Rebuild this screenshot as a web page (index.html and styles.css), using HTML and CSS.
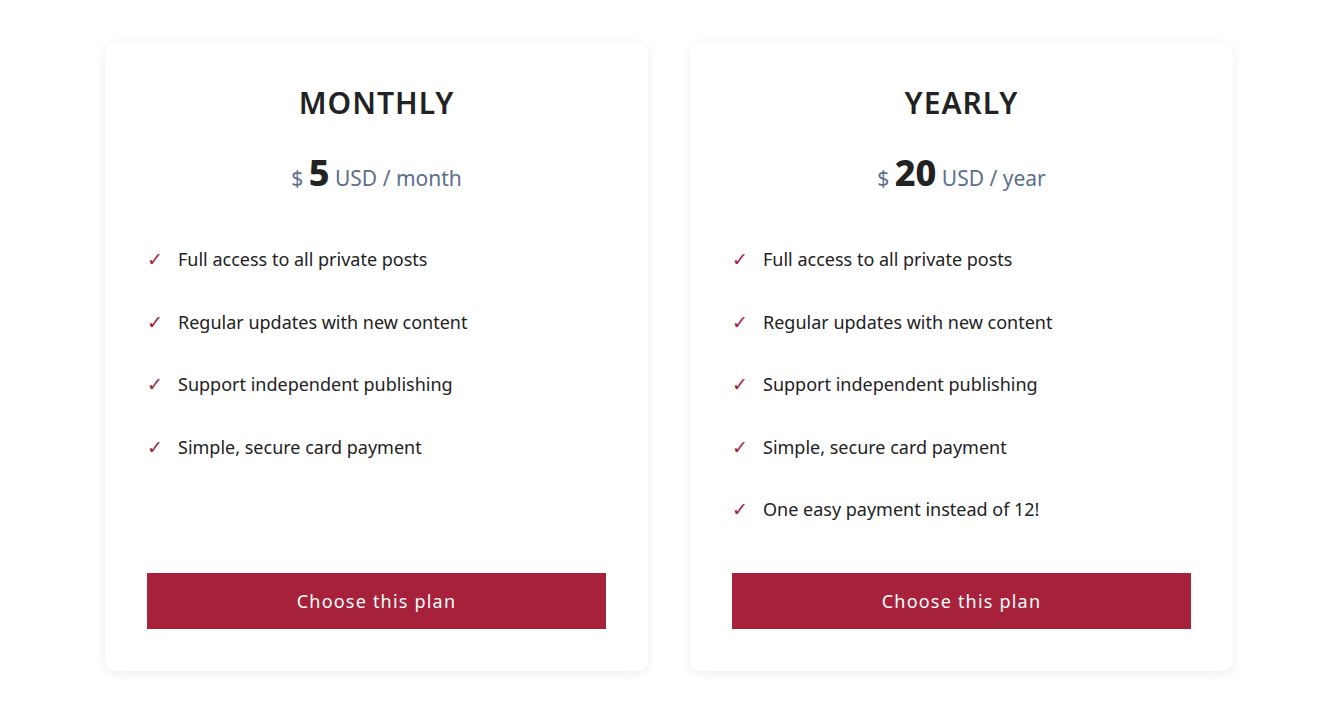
FILE: index.html
```html
<!DOCTYPE html>
<html lang="en">
<head>
    <meta charset="UTF-8">
    <meta name="viewport" content="width=device-width, initial-scale=1.0">
    <title>Plans</title>
    <link rel="stylesheet" href="styles.css">
</head>
<body>
    <div class="plans">
        <div class="plan">
            <h2 class="plan-name">MONTHLY</h2>
            <p class="plan-price">$ <strong>5</strong> USD / month</p>
            <ul class="plan-features">
                <li><span class="check">✓</span>Full access to all private posts</li>
                <li><span class="check">✓</span>Regular updates with new content</li>
                <li><span class="check">✓</span>Support independent publishing</li>
                <li><span class="check">✓</span>Simple, secure card payment</li>
            </ul>
            <button type="button" class="plan-button">Choose this plan</button>
        </div>

        <div class="plan">
            <h2 class="plan-name">YEARLY</h2>
            <p class="plan-price">$ <strong>20</strong> USD / year</p>
            <ul class="plan-features">
                <li><span class="check">✓</span>Full access to all private posts</li>
                <li><span class="check">✓</span>Regular updates with new content</li>
                <li><span class="check">✓</span>Support independent publishing</li>
                <li><span class="check">✓</span>Simple, secure card payment</li>
                <li><span class="check">✓</span>One easy payment instead of 12!</li>
            </ul>
            <button type="button" class="plan-button">Choose this plan</button>
        </div>
    </div>
</body>
</html>
```

FILE: styles.css
```css
body {
    font-family: "Noto Sans", "Open Sans", sans-serif;
    margin: 0;
    padding: 43px 0 36px 2px;
    background: #fff;
    color: #222;
}

.plans {
    max-width: 1128px;
    margin: 0 auto;
    display: grid;
    grid-template-columns: 1fr 1fr;
    gap: 42px;
}

.plan {
    background: #fff;
    border-radius: 10px;
    box-shadow: 0 2px 12px rgba(0, 0, 0, 0.08);
    padding: 42px 42px 42px;
    display: flex;
    flex-direction: column;
}

.plan-name {
    margin: 0;
    text-align: center;
    font-size: 30px;
    line-height: 36px;
    font-weight: 600;
    letter-spacing: 1px;
    color: #222;
}

.plan-price {
    margin: 28px 0 0;
    text-align: center;
    font-size: 21px;
    line-height: 48px;
    color: #5b6e8c;
}

.plan-price strong {
    font-size: 36px;
    font-weight: 800;
    color: #222;
}

.plan-features {
    list-style: none;
    margin: 43px 0 0;
    padding: 0 0 15px;
    flex: 1;
}

.plan-features li {
    font-size: 18px;
    line-height: 28px;
    margin-bottom: 34.5px;
    display: flex;
}

.check {
    color: #a8213a;
    width: 31px;
    font-family: "DejaVu Sans", sans-serif;
    font-size: 19px;
    font-weight: bold;
}

.plan-button {
    height: 56px;
    border: 0;
    background: #a8213a;
    color: #fff;
    font-family: inherit;
    font-size: 18px;
    letter-spacing: 1.2px;
    cursor: pointer;
}
```
